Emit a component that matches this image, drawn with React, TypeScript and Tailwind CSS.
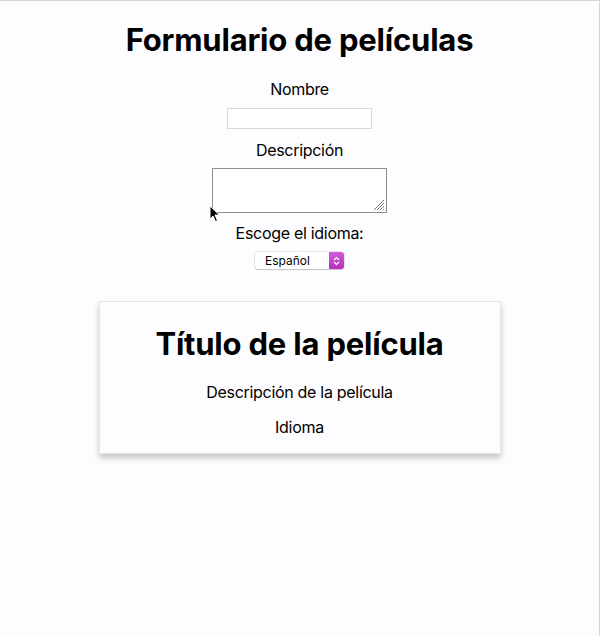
import { useState } from "react";

const IDIOMAS = ["Español", "Inglés", "Francés"];

// Small arrow pointer that sits over the textarea corner in the capture
function Cursor() {
  return (
    <svg width="12" height="18" viewBox="0 0 12 18" className="absolute left-[209px] top-[204px]">
      <path d="M1 1 L1 14 L4 11 L6.5 16.5 L8.5 15.5 L6 10 L10.5 10 Z" fill="#000" stroke="#fff" strokeWidth="1" />
    </svg>
  );
}

export default function App() {
  const [nombre, setNombre] = useState("");
  const [descripcion, setDescripcion] = useState("");
  const [idioma, setIdioma] = useState("Español");

  return (
    <div
      className="relative h-[636px] w-[600px] overflow-hidden border-t border-r border-[#d6d6d6] bg-[#fdfcfe] text-black"
      style={{ fontFamily: "Inter, 'Noto Sans', sans-serif" }}
    >
      <div className="flex flex-col items-center">
        <h1 className="mt-[20px] text-[31px] font-bold leading-[37px] tracking-[-0.2px]">
          Formulario de películas
        </h1>

        <label className="mt-[19px] text-[16px] leading-[24px] tracking-[-0.3px]">Nombre</label>
        <input
          value={nombre}
          onChange={(e) => setNombre(e.target.value)}
          className="mt-[7px] h-[21px] w-[145px] border border-[#d9d9d9] bg-white px-1 text-[13px] outline-none"
        />

        <label className="mt-[9px] text-[16px] leading-[24px] tracking-[-0.3px]">Descripción</label>
        <div className="relative mt-[6px]">
          <textarea
            value={descripcion}
            onChange={(e) => setDescripcion(e.target.value)}
            className="block h-[45px] w-[175px] resize-none border border-[#8f8f8f] bg-white p-1 text-[13px] outline-none"
          />
          <svg width="12" height="12" viewBox="0 0 12 12" className="absolute bottom-[2px] right-[2px]">
            <path d="M11 1 L1 11 M11 4 L4 11 M11 7 L7 11 M11 10 L10 11" stroke="#7a7a7a" strokeWidth="1" />
          </svg>
        </div>

        <label className="mt-[8px] text-[16px] leading-[24px] tracking-[-0.3px]">Escoge el idioma:</label>
        <div className="mt-[7px] flex h-[17px] w-[89px] overflow-hidden rounded-[3px] bg-white shadow-[0_0_0_0.5px_rgba(0,0,0,0.18),0_1px_1px_rgba(0,0,0,0.15)]">
          <select
            value={idioma}
            onChange={(e) => setIdioma(e.target.value)}
            className="flex-1 appearance-none bg-transparent pl-[10px] text-[12px] leading-[17px] outline-none"
          >
            {IDIOMAS.map((i) => (
              <option key={i}>{i}</option>
            ))}
          </select>
          <div className="flex w-[15px] items-center justify-center bg-gradient-to-b from-[#d35ad8] to-[#b531b9]">
            <svg width="7" height="10" viewBox="0 0 7 10">
              <path d="M1 4 L3.5 1.5 L6 4 M1 6 L3.5 8.5 L6 6" fill="none" stroke="#fff" strokeWidth="1.2" />
            </svg>
          </div>
        </div>

        {/* Vista previa */}
        <div className="mt-[32px] flex w-[402px] flex-col items-center border border-[#e6e6e6] bg-[#fdfcfe] pb-[14px] shadow-[0_4px_6px_rgba(0,0,0,0.22)]">
          <h2 className="mt-[22px] text-[31px] font-bold leading-[40px] tracking-[-0.2px]">
            {nombre || "Título de la película"}
          </h2>
          <p className="mt-[16px] text-[16px] leading-[24px] tracking-[-0.3px]">
            {descripcion || "Descripción de la película"}
          </p>
          <p className="mt-[11px] text-[16px] leading-[24px] tracking-[-0.3px]">{idioma ? "Idioma" : ""}</p>
        </div>
      </div>
      <Cursor />
    </div>
  );
}
